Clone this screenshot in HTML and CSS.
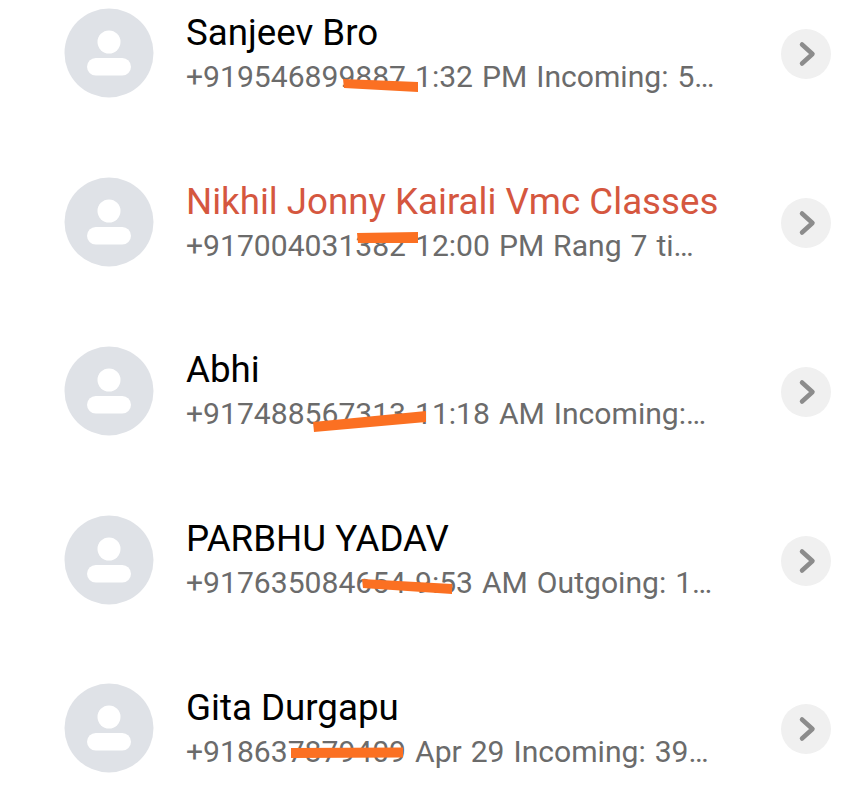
FILE: index.html
```html
<!DOCTYPE html>
<html lang="en">
<head>
<meta charset="utf-8">
<title>Calls</title>
<link rel="stylesheet" href="styles.css">
</head>
<body>
<ul class="call-list">
  <li class="call-row">
    <svg class="avatar" viewBox="0 0 90 90"><circle cx="45" cy="45" r="44.5" fill="#dfe2e7"/><circle cx="45" cy="34" r="11.5" fill="#fff"/><rect x="23" y="50" width="44" height="17.5" rx="8.75" fill="#fff"/></svg>
    <div class="call-text">
      <div class="call-name">Sanjeev Bro</div>
      <div class="call-meta">+919546899887 1:32 PM Incoming: 5…</div>
    </div>
    <svg class="chevron" viewBox="0 0 50 50"><circle cx="25" cy="25" r="25" fill="#f0f0f0"/><path d="M21 15.5 L31.5 25 L21 34.5" fill="none" stroke="#8c8c8c" stroke-width="4.5" stroke-linecap="round" stroke-linejoin="round"/></svg>
  </li>
  <li class="call-row">
    <svg class="avatar" viewBox="0 0 90 90"><circle cx="45" cy="45" r="44.5" fill="#dfe2e7"/><circle cx="45" cy="34" r="11.5" fill="#fff"/><rect x="23" y="50" width="44" height="17.5" rx="8.75" fill="#fff"/></svg>
    <div class="call-text">
      <div class="call-name missed">Nikhil Jonny Kairali Vmc Classes</div>
      <div class="call-meta">+917004031382 12:00 PM Rang 7 ti…</div>
    </div>
    <svg class="chevron" viewBox="0 0 50 50"><circle cx="25" cy="25" r="25" fill="#f0f0f0"/><path d="M21 15.5 L31.5 25 L21 34.5" fill="none" stroke="#8c8c8c" stroke-width="4.5" stroke-linecap="round" stroke-linejoin="round"/></svg>
  </li>
  <li class="call-row">
    <svg class="avatar" viewBox="0 0 90 90"><circle cx="45" cy="45" r="44.5" fill="#dfe2e7"/><circle cx="45" cy="34" r="11.5" fill="#fff"/><rect x="23" y="50" width="44" height="17.5" rx="8.75" fill="#fff"/></svg>
    <div class="call-text">
      <div class="call-name">Abhi</div>
      <div class="call-meta">+917488567313 11:18 AM Incoming:…</div>
    </div>
    <svg class="chevron" viewBox="0 0 50 50"><circle cx="25" cy="25" r="25" fill="#f0f0f0"/><path d="M21 15.5 L31.5 25 L21 34.5" fill="none" stroke="#8c8c8c" stroke-width="4.5" stroke-linecap="round" stroke-linejoin="round"/></svg>
  </li>
  <li class="call-row">
    <svg class="avatar" viewBox="0 0 90 90"><circle cx="45" cy="45" r="44.5" fill="#dfe2e7"/><circle cx="45" cy="34" r="11.5" fill="#fff"/><rect x="23" y="50" width="44" height="17.5" rx="8.75" fill="#fff"/></svg>
    <div class="call-text">
      <div class="call-name">PARBHU YADAV</div>
      <div class="call-meta">+917635084654 9:53 AM Outgoing: 1…</div>
    </div>
    <svg class="chevron" viewBox="0 0 50 50"><circle cx="25" cy="25" r="25" fill="#f0f0f0"/><path d="M21 15.5 L31.5 25 L21 34.5" fill="none" stroke="#8c8c8c" stroke-width="4.5" stroke-linecap="round" stroke-linejoin="round"/></svg>
  </li>
  <li class="call-row">
    <svg class="avatar" viewBox="0 0 90 90"><circle cx="45" cy="45" r="44.5" fill="#dfe2e7"/><circle cx="45" cy="34" r="11.5" fill="#fff"/><rect x="23" y="50" width="44" height="17.5" rx="8.75" fill="#fff"/></svg>
    <div class="call-text">
      <div class="call-name">Gita Durgapu</div>
      <div class="call-meta">+918637879409 Apr 29 Incoming: 39…</div>
    </div>
    <svg class="chevron" viewBox="0 0 50 50"><circle cx="25" cy="25" r="25" fill="#f0f0f0"/><path d="M21 15.5 L31.5 25 L21 34.5" fill="none" stroke="#8c8c8c" stroke-width="4.5" stroke-linecap="round" stroke-linejoin="round"/></svg>
  </li>
</ul>
<svg class="redactions" viewBox="0 0 849 800">
  <polygon points="343,79 418,82 418,92 344,88"/>
  <polygon points="357,233 418,232 418,243 358,243"/>
  <polygon points="313,422 426,411 426,422 314,432"/>
  <polygon points="362,579 452,584 452,594 363,588"/>
  <polygon points="291,748 403,747.5 403,757.5 291,758"/>
</svg>
</body>
</html>
```

FILE: styles.css
```css
html, body {
  margin: 0;
  padding: 0;
  height: 800px;
  overflow: hidden;
  background: #fff;
}

body {
  position: relative;
  font-family: Roboto, "Liberation Sans", sans-serif;
}

.call-list {
  list-style: none;
  margin: -31px 0 0;
  padding: 0 18px 0 64px;
}

.call-row {
  display: flex;
  align-items: center;
  height: 168.75px;
}

.avatar {
  flex: none;
  width: 90px;
  height: 90px;
}

.call-text {
  flex: 1;
  min-width: 0;
  margin-left: 32px;
  padding-top: 3px;
  white-space: nowrap;
}

.call-name {
  font-size: 36.7px;
  line-height: 44px;
  color: #000;
}

.call-name.missed {
  color: #d5573f;
}

.call-meta {
  font-size: 30.1px;
  line-height: 44px;
  word-spacing: 1.5px;
  color: #6b6b6b;
}

.chevron {
  flex: none;
  width: 50px;
  height: 50px;
  margin-top: 2px;
}

.redactions {
  position: absolute;
  top: 0;
  left: 0;
  width: 849px;
  height: 800px;
  fill: #fb7022;
}
```
